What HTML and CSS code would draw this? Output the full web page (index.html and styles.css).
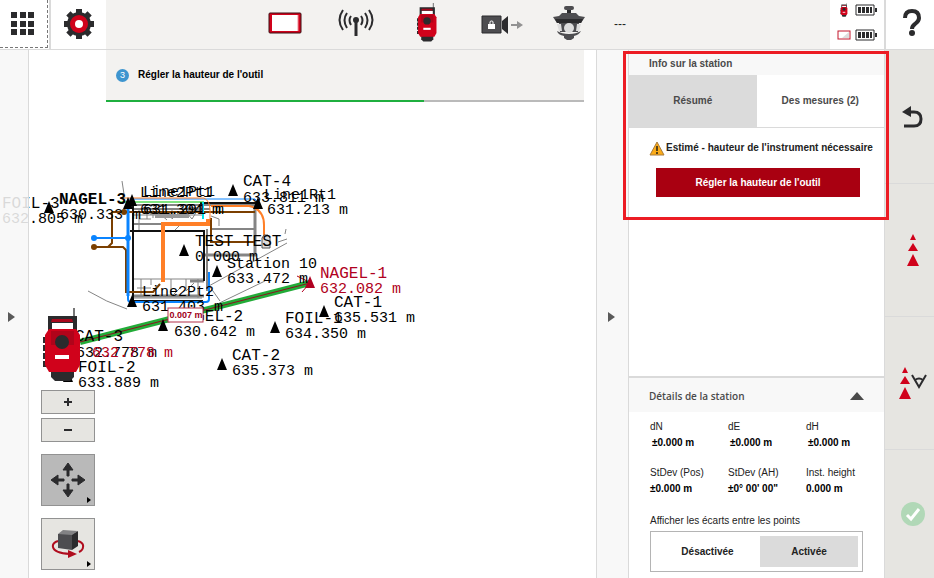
FILE: index.html
```html
<!DOCTYPE html>
<html lang="fr">
<head>
  <meta charset="UTF-8" />
  <meta name="viewport" content="width=device-width, initial-scale=1.0"/>
  <title>Info sur la station</title>
  <link rel="stylesheet" href="styles.css">
</head>
<body>
  <svg class="defs" aria-hidden="true">
    <symbol id="instrument" viewBox="0 0 38 74">
      <path d="M30 0h2v10h-2z" fill="#777"/>
      <path d="M5 8h29v16H5z" fill="#2b2b2d"/>
      <path d="M9 11h20l1 3H8z" fill="#a8071c"/>
      <path d="M9 15h21v6H9z" fill="#fff"/>
      <path d="M0 29h4v6H0zM0 37h4v6H0zM0 45h4v6H0zM0 53h4v6H0z" fill="#2b2b2d"/>
      <path d="M8 62h23v7l-4 4H12l-4-4z" fill="#2b2b2d"/>
      <path d="M6 21h27l4 6v30l-4 7H6l-4-7V27z" fill="#d0021b"/>
      <path d="M8 23h23v14H8z" fill="#b0041a"/>
      <circle cx="19" cy="34" r="7" fill="#2b2b2d"/>
      <path d="M12 47h14v4H12z" fill="#fff"/>
    </symbol>
    <symbol id="battery" viewBox="0 0 22 12">
      <path d="M1 1h18v10H1z" fill="#fff" stroke="#2b2b2d"/>
      <path d="M20 4h2v4h-2zM3 3h3v6H3zM7 3h3v6H7zM11 3h3v6h-3zM15 3h2v6h-2z" fill="#2b2b2d"/>
    </symbol>
    <symbol id="targets" viewBox="0 0 12 32">
      <path d="M6 0l3 6H3zM6 9l5 8H1zM6 20l6 12H0z" fill="#d0021b"/>
    </symbol>
    <path id="tri" d="M0-6L5 6H-5z"/>
  </svg>

  <header class="topbar">
    <button class="menu-btn" aria-label="Menu">
      <svg width="24" height="24" fill="#2b2b2d"><path d="M0 0h6v6H0zM9 0h6v6H9zM17 0h6v6h-6zM0 9h6v6H0zM9 9h6v6H9zM17 9h6v6h-6zM0 17h6v6H0zM9 17h6v6H9zM17 17h6v6h-6z"/></svg>
    </button>
    <button class="gear-btn" aria-label="Paramètres">
      <svg width="30" height="30" viewBox="-15 -15 30 30">
        <g fill="#2b2b2d">
          <circle r="12"/>
          <path d="M-3-15h6v30h-6zM-15-3h30v6h-30z"/>
          <path transform="rotate(45)" d="M-3-15h6v30h-6zM-15-3h30v6h-30z"/>
        </g>
        <circle r="9" fill="#d0021b"/>
        <circle r="4" fill="#fff"/>
      </svg>
    </button>
    <nav class="toolbar">
      <button aria-label="Tablette">
        <svg width="34" height="22"><rect x="1" y="1" width="32" height="20" rx="1" fill="#d0021b" stroke="#3a1114" stroke-width="1"/><path d="M4 3h26v16H4z" fill="#fff"/><path d="M30 3v16" stroke="#ef8a94"/></svg>
      </button>
      <button aria-label="Radio">
        <svg width="36" height="28" fill="none" stroke="#2b2b2d" stroke-width="2"><circle cx="18" cy="11" r="2" fill="#2b2b2d"/><path d="M18 11v16" stroke-width="3"/><path d="M13 7q-3 4 0 9M9 4q-5 7 0 15M5 1q-7 10 0 20M23 7q3 4 0 9M27 4q5 7 0 15M31 1q7 10 0 20"/></svg>
      </button>
      <button aria-label="Instrument">
        <svg width="20" height="39"><use href="#instrument"/></svg>
      </button>
      <button aria-label="Caméra verrouillée" class="camera">
        <svg width="42" height="20"><path d="M1 1h19v17H1z" fill="#4d4d50" stroke="#2b2b2d"/><path d="M21 6l6-5v18l-6-5z" fill="#2b2b2d"/><path d="M7 9h7v5H7z" fill="#fff"/><path d="M9 9V7q0-1 1.500-1T12 7v2" fill="none" stroke="#fff"/><path d="M30 9h6V6l6 4-6 4v-3h-6z" fill="#929292"/></svg>
      </button>
      <button aria-label="Prisme">
        <svg width="32" height="36"><path d="M14 4h4v6h-4z" fill="#2b2b2d"/><rect x="11" y="1" width="10" height="4" rx="2" fill="#4d4d50"/><path d="M9 8h14l3 3 6 1-4 6H4L0 12l6-1z" fill="#4d4d50"/><path d="M2 14h28l-2 4H4z" fill="#2b2b2d"/><path d="M6 18h20l-1 9H7z" fill="#4d4d50"/><circle cx="16" cy="23" r="5" fill="#ddd"/><path d="M4 19h4l1 7H6zM28 19h-4l-1 7h3z" fill="#ddd"/><path d="M4 26q5 3 12 3t12-3q-2 4-7 5v2l-3 2h-4l-3-2v-2q-6-1-7-5z" fill="#4d4d50"/></svg>
      </button>
      <span class="no-value">---</span>
    </nav>
    <div class="status">
      <svg width="8" height="14"><use href="#instrument"/></svg>
      <svg width="22" height="12"><use href="#battery"/></svg>
      <svg width="14" height="10"><rect x="1" y="1" width="12" height="8" fill="#fff" stroke="#c4162c"/><path d="M12 2v6H5z" fill="#ddd"/></svg>
      <svg width="22" height="12"><use href="#battery"/></svg>
    </div>
    <button class="help-btn" aria-label="Aide">
      <svg width="18" height="28"><path d="M2 9q0-7 7-7t7 7q0 3-4 6-3 2-3 5" fill="none" stroke="#2b2b2d" stroke-width="4"/><circle cx="9" cy="24" r="3" fill="#2b2b2d"/></svg>
    </button>
  </header>

  <main class="workspace">
    <section class="stage">
      <svg class="map" viewBox="0 50 596 528" preserveAspectRatio="xMinYMin meet">
        <!-- walls and fittings -->
        <g fill="none" stroke="#858585">
          <path d="M122 181l2 13M88 291q18 11 39 18M287 243L207 287M205 310l60-29M208 284l12 17M286 229l-1 5M278 242l9-3"/>
          <path d="M134 205h121M134 209h76" stroke-width="2"/>
          <path d="M255 203v53M204 255h52" stroke-width="3"/>
          <path d="M211 229h44M134 224h30M207 229v62" stroke-width="2"/>
          <path d="M134 215h70M139 210v20M147 210v9M153 210v8M159 213l8 7M172 210v9l7-7M186 212l6 7 5-8M139 219h12M175 230l5-5M211 216l8 3v7"/>
          <path d="M134 279h69M134 298h68M141 279v18M151 279v6M171 279v18l9-9M186 279v12l8-8M198 279v19M137 288h14" />
          <path d="M134 296h70M190 281h14" stroke-width="3"/>
          <path d="M150 213h20M155 216h34M188 209h13" stroke-width="4" stroke="#999"/>
        </g>
        <path d="M133 200v101M130 231h74v50M200 203h58M133 301h70" fill="none" stroke="#111" stroke-width="2"/>
        <path d="M112 212h99M211 212h44M211 218v24h44M112 212v31l-4 4M94 247h29l3 3v42h27l7-8" fill="none" stroke="#7b3f00" stroke-width="2"/>
        <g fill="none" stroke="#0a84ff">
          <path d="M128 200v99q0 3 3 3h75q3 0 3-3v-27" stroke-width="2"/>
          <path d="M128 206v90" stroke-width="3"/>
          <path d="M128 199h127l3 4"/>
          <path d="M94 238h34" stroke-width="2"/>
        </g>
        <g fill="#0a84ff"><circle cx="94" cy="238" r="3"/><circle cx="128" cy="238" r="3"/></g>
        <g fill="#7b3f00"><circle cx="94" cy="247" r="3"/><circle cx="124" cy="212" r="3"/></g>
        <path d="M120 202h84" stroke="#00c800"/>
        <path d="M203 202v17" stroke="#00e0e8" stroke-width="2"/>
        <g fill="none" stroke="#ff7f27">
          <path d="M163 282v-58h45v-5" stroke-width="4"/>
          <path d="M120 198h84q6 3 6 12v10"/>
          <path d="M211 206h38q15 3 15 19v11" stroke-width="2"/>
        </g>
        <path d="M264 235h4l2 3v10h-8v-10z" fill="#ddd" stroke="#555"/>

        <!-- sight line -->
        <path d="M80 342L310 283" stroke="#22ac38" stroke-width="6"/>
        <path d="M80 342L310 283" stroke="#8e1020"/>

        <g>
          <use href="#tri" x="49" y="207"/><use href="#tri" x="128" y="203"/><use href="#tri" x="132" y="200"/>
          <use href="#tri" x="184" y="250"/><use href="#tri" x="217" y="271"/><use href="#tri" x="233" y="190"/>
          <use href="#tri" x="258" y="203"/><use href="#tri" x="132" y="301"/><use href="#tri" x="163" y="325"/>
          <use href="#tri" x="275" y="327"/><use href="#tri" x="324" y="311"/><use href="#tri" x="222" y="364"/>
          <use href="#tri" x="68" y="376"/>
          <use href="#tri" x="310" y="282" fill="#b00020"/>
        </g>
        <path d="M297 276l10 5M302 292l7-8" stroke="#b00020"/>

        <g class="point-name">
          <text x="2" y="208">FOIL-3</text>
          <text x="59" y="204" class="strong">NAGEL-3</text>
          <text x="243" y="186">CAT-4</text>
          <text x="195" y="246">TEST TEST</text>
          <text x="334" y="307">CAT-1</text>
          <text x="285" y="323">FOIL-1</text>
          <text x="232" y="360">CAT-2</text>
          <text x="176" y="321">NAGEL-2</text>
          <text x="75" y="341">CAT-3</text>
          <text x="78" y="372">FOIL-2</text>
          <text x="320" y="278" class="active">NAGEL-1</text>
        </g>
        <g class="point-value">
          <text x="140" y="197">Line2Pt1</text>
          <text x="143" y="196">Line1Pt1</text>
          <text x="264" y="199">Line1Rt1</text>
          <text x="227" y="268">Station 10</text>
          <text x="142" y="296">Line2Pt2</text>
          <text x="2" y="223">632.805 m</text>
          <text x="60" y="219">630.333 m</text>
          <text x="140" y="214">631.304 m</text>
          <text x="143" y="214">631.291 m</text>
          <text x="243" y="202">633.811 m</text>
          <text x="267" y="214">631.213 m</text>
          <text x="195" y="261">0.000 m</text>
          <text x="227" y="283">633.472 m</text>
          <text x="334" y="322">635.531 m</text>
          <text x="285" y="338">634.350 m</text>
          <text x="232" y="375">635.373 m</text>
          <text x="142" y="311">631.403 m</text>
          <text x="174" y="336">630.642 m</text>
          <text x="76" y="357">632.778 m</text>
          <text x="78" y="387">633.889 m</text>
          <text x="92" y="357" class="active">632.778 m</text>
          <text x="320" y="293" class="active">632.082 m</text>
        </g>

        <rect x="168" y="308" width="35" height="14" fill="#fff" stroke="#b4304a"/>
        <text x="186" y="318" class="distance">0.007 m</text>
        <use href="#instrument" x="43" y="308" width="38" height="74"/>
      </svg>

      <button class="drawer left" aria-label="Ouvrir le volet"><svg width="7" height="10"><path d="M0 0l7 5-7 5z"/></svg></button>

      <div class="canvas-ui">
        <div class="step">
          <p><span class="step-no">3</span><b>Régler la hauteur de l'outil</b></p>
          <div class="progress"><span style="width: 66.6%"></span></div>
        </div>
        <div class="map-tools">
          <button class="zoom" aria-label="Zoom avant"><svg width="8" height="8"><path d="M0 4h8M4 0v8" stroke="#2b2b2d" stroke-width="2"/></svg></button>
          <button class="zoom" aria-label="Zoom arrière"><svg width="8" height="8"><path d="M0 4h8" stroke="#2b2b2d" stroke-width="2"/></svg></button>
          <button class="tool selected" aria-label="Déplacer">
            <svg width="34" height="34" viewBox="-17 -17 34 34" fill="#2b2b2d"><path d="M-1-4v-6h-4l5-7 5 7H1v6zM-1 4v6h-4l5 7 5-7H1V4zM-4-1h-6v-4l-7 5 7 5V1h6zM4-1h6v-4l7 5-7 5V1H4z" stroke="#2b2b2d"/></svg>
            <svg class="more" width="4" height="6"><path d="M0 0l4 3-4 3z"/></svg>
          </button>
          <button class="tool" aria-label="Faire pivoter">
            <svg width="34" height="28"><path d="M7 11Q1 13 2 17q1 6 17 7M27 11q6 2 5 6 0 3-4 5" fill="none" stroke="#b00d1e" stroke-width="2"/><path d="M17 20l9 4-9 4z" fill="#b00d1e"/><path d="M7 4h14v16L7 18z" fill="#4d4d50"/><path d="M21 4l6-3v15l-6 4z" fill="#2b2b2d"/><path d="M7 4l5-4 15 1-6 4z" fill="#828284"/></svg>
            <svg class="more" width="4" height="6"><path d="M0 0l4 3-4 3z"/></svg>
          </button>
        </div>
      </div>
    </section>

    <button class="drawer right" aria-label="Fermer le volet"><svg width="7" height="10"><path d="M0 0l7 5-7 5z"/></svg></button>

    <aside class="panel">
      <div class="highlight"></div>
      <h2 class="panel-title">Info sur la station</h2>
      <div class="tabs">
        <button class="tab current">Résumé</button>
        <button class="tab">Des mesures (2)</button>
      </div>
      <div class="summary">
        <p class="warning">
          <svg width="16" height="15"><path d="M8 1l7 13H1z" fill="#fbab18" stroke="#a87b3c"/><path d="M8 5v5M8 11v2" stroke="#5b4313" stroke-width="2"/></svg>
          Estimé - hauteur de l'instrument nécessaire
        </p>
        <button class="primary">Régler la hauteur de l'outil</button>
      </div>
      <div class="details-head">
        <h2>Détails de la station</h2>
        <svg width="14" height="8"><path d="M7 0l7 8H0z" fill="#4a4a4a"/></svg>
      </div>
      <div class="details">
        <dl class="values">
          <div class="delta"><dt>dN</dt><dd>±0.000 m</dd></div>
          <div class="delta"><dt>dE</dt><dd>±0.000 m</dd></div>
          <div class="delta"><dt>dH</dt><dd>±0.000 m</dd></div>
          <div><dt>StDev (Pos)</dt><dd>±0.000 m</dd></div>
          <div><dt>StDev (AH)</dt><dd>±0° 00' 00"</dd></div>
          <div><dt>Inst. height</dt><dd>0.000 m</dd></div>
        </dl>
        <fieldset>
          <legend>Afficher les écarts entre les points</legend>
          <div class="toggle">
            <input type="radio" name="gaps" id="gaps-off"><label for="gaps-off">Désactivée</label>
            <input type="radio" name="gaps" id="gaps-on" checked><label for="gaps-on">Activée</label>
          </div>
        </fieldset>
      </div>
    </aside>

    <nav class="actions">
      <button aria-label="Retour"><svg width="22" height="22"><path d="M0 6l9-6v11z" fill="#2b2b2d"/><path d="M7 6h5q7 0 7 7t-7 7H2" fill="none" stroke="#2b2b2d" stroke-width="3"/></svg></button>
      <button aria-label="Cibles"><svg width="12" height="32"><use href="#targets"/></svg></button>
      <button aria-label="Mesurer les cibles"><svg width="28" height="32"><use href="#targets" width="12" height="32"/><path d="M13 8l7 12 7-12M16 13q4-3 8 0" fill="none" stroke="#2b2b2d" stroke-width="2"/></svg></button>
      <button aria-label="Valider"><svg width="24" height="24"><circle cx="12" cy="12" r="12" fill="#b1d8b7"/><path d="M6 13l4 4 8-10" fill="none" stroke="#fff" stroke-width="3"/></svg></button>
    </nav>
  </main>
</body>
</html>
```

FILE: styles.css
```css
* {
  box-sizing: border-box;
}

body {
  margin: 0;
  min-height: 100vh;
  display: flex;
  flex-direction: column;
  font: 10px/16px "Liberation Sans", Arial, sans-serif;
  color: #222;
  background: #fff;
}

h2, p, dl, dd {
  margin: 0;
}

button {
  display: flex;
  align-items: center;
  justify-content: center;
  padding: 0;
  border: none;
  background: none;
  font: inherit;
  color: inherit;
  cursor: pointer;
}

svg {
  flex: none;
}

.defs {
  position: absolute;
  width: 0;
  height: 0;
}

/* top bar */
.topbar {
  display: grid;
  grid-template-columns: 51px 55px 1fr 54px 50px;
  height: 50px;
  border-bottom: 1px solid #dadada;
}

.menu-btn {
  position: relative;
  padding-right: 4px;
  padding-bottom: 2px;
  border-right: 2px solid #dadada;
}

.menu-btn::after {
  content: "";
  position: absolute;
  top: 0;
  left: 0;
  width: 47px;
  height: 47px;
  border-right: 1px dashed #777;
  border-bottom: 1px dashed #777;
}

.gear-btn {
  padding-bottom: 2px;
}

.toolbar {
  display: flex;
  justify-content: center;
  padding-right: 12px;
  background: #f3f2f0;
}

.toolbar button {
  width: 71px;
  padding-bottom: 4px;
}

.toolbar .camera {
  padding-left: 8px;
  padding-bottom: 0;
}

.no-value {
  width: 71px;
  padding: 16px 0 0 10px;
  font-size: 12px;
}

.status {
  display: grid;
  grid-template-columns: 14px 22px;
  grid-auto-rows: 12px;
  gap: 13px 4px;
  padding: 4px 0 0 7px;
  align-items: center;
  justify-items: center;
}

.help-btn {
  padding: 0 0 3px 4px;
  border-left: 2px solid #dadada;
}

/* workspace */
.workspace {
  flex: 1;
  display: grid;
  grid-template-columns: 1fr 32px 256px 50px;
}

.stage {
  position: relative;
  display: grid;
  grid-template-columns: 29px 1fr;
}

.map {
  position: absolute;
  top: 0;
  left: 0;
  width: 100%;
  height: 100%;
}

.map text {
  font-family: "Liberation Mono", monospace;
}

.point-name {
  font-size: 16px;
}

.point-value {
  font-size: 15px;
}

.strong {
  font-weight: bold;
}

.active {
  fill: #b00020;
}

.map .distance {
  font: bold 9px "Liberation Sans", Arial, sans-serif;
  fill: #a00018;
  text-anchor: middle;
}

.drawer {
  position: relative;
  padding-top: 6px;
}

.drawer svg {
  fill: #5a5a5a;
}

.drawer.left {
  background: rgba(247, 247, 247, 0.88);
  border-right: 1px solid #dadada;
  padding-right: 6px;
}

.drawer.right {
  background: #f8f8f8;
  border-left: 1px solid #dadada;
  padding-right: 2px;
}

.canvas-ui {
  position: relative;
  display: flex;
  flex-direction: column;
  justify-content: space-between;
  padding: 0 12px 8px;
}

.step {
  margin-left: 65px;
  background: #f3f2f0;
  color: #000;
}

.step p {
  display: flex;
  align-items: center;
  gap: 9px;
  height: 50px;
  padding-left: 10px;
}

.step-no {
  width: 13px;
  height: 13px;
  border-radius: 50%;
  background: #3e95cf;
  color: #fff;
  font-size: 9px;
  line-height: 13px;
  text-align: center;
}

.progress {
  height: 2px;
  background: #bababa;
}

.progress span {
  display: block;
  height: 2px;
  background: #1faf3f;
}

.map-tools {
  display: flex;
  flex-direction: column;
  width: 54px;
}

.map-tools button {
  border: 1px solid #929292;
  background: #e6e5e1;
}

.zoom {
  height: 24px;
  margin-bottom: 4px;
}

.tool {
  position: relative;
  height: 52px;
}

.map-tools .selected {
  margin: 8px 0 12px;
  background: #b9b9b9;
}

.more {
  position: absolute;
  right: 3px;
  bottom: 2px;
}

/* station panel */
.panel {
  position: relative;
  display: flex;
  flex-direction: column;
  border-left: 1px solid #dadada;
}

.highlight {
  position: absolute;
  z-index: 2;
  top: 1px;
  left: -6px;
  right: -5px;
  height: 169px;
  border: 3px solid #ec1c24;
  pointer-events: none;
}

.panel-title {
  height: 25px;
  padding: 6px 20px 0;
  background: #f8f8f8;
  color: #4a4a4a;
  font-size: 10px;
  line-height: 16px;
}

.tabs {
  display: grid;
  grid-template-columns: 1fr 1fr;
  height: 53px;
  border-bottom: 1px solid #dadada;
}

.tab {
  font-weight: bold;
  color: #4a4a4a;
}

.tab.current {
  background: #dbdbdb;
}

.summary {
  flex: 1;
  padding: 12px 0 0 20px;
}

.warning {
  display: flex;
  align-items: center;
  gap: 1px;
  margin-bottom: 12px;
  font-weight: bold;
  white-space: nowrap;
}

.primary {
  width: 204px;
  height: 29px;
  margin-left: 7px;
  background: #a90011;
  color: #fff;
  font-weight: bold;
}

.details-head {
  display: flex;
  align-items: center;
  justify-content: space-between;
  height: 36px;
  padding: 2px 20px 0;
  border-top: 2px solid #dadada;
  background: #f8f8f8;
}

.details-head h2 {
  font: 600 10px/16px "Open Sans", sans-serif;
  color: #4a4a4a;
}

.details {
  padding: 7px 21px 6px;
}

.values {
  display: grid;
  grid-template-columns: 78px 78px 1fr;
  row-gap: 14px;
  margin-bottom: 16px;
  white-space: nowrap;
}

.values dd {
  font-weight: bold;
  color: #000;
}

.delta dd {
  padding-left: 2px;
}

fieldset {
  margin: 0;
  padding: 0;
  border: none;
}

legend {
  padding: 0 0 2px;
}

.toggle {
  display: grid;
  grid-template-columns: 1fr 98px;
  height: 41px;
  padding: 4px;
  border: 1px solid #b4b4b4;
}

.toggle input {
  position: absolute;
  opacity: 0;
}

.toggle label {
  display: flex;
  align-items: center;
  justify-content: center;
  font-weight: bold;
}

.toggle input:checked + label {
  background: #dbdbdb;
}

/* right-hand actions */
.actions {
  display: grid;
  grid-template-rows: repeat(3, 133px) 1fr;
  background: #e6e5e1;
  border-left: 1px solid #dadada;
}

.actions button {
  padding-left: 6px;
}

.actions button + button {
  border-top: 1px solid #dadada;
}
```
